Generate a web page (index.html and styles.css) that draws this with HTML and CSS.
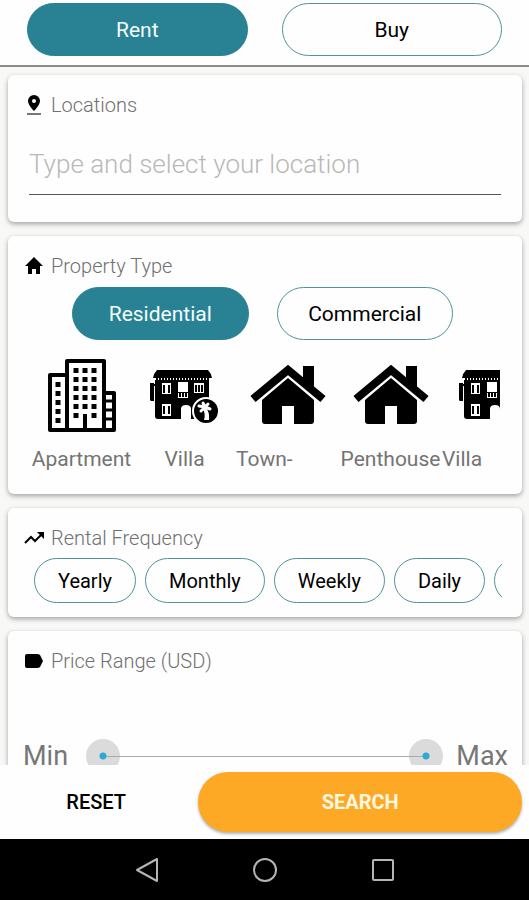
FILE: index.html
```html
<!DOCTYPE html>
<html lang="en">
<head>
<meta charset="utf-8">
<meta name="viewport" content="width=device-width, initial-scale=1">
<title>Property search</title>
<link rel="stylesheet" href="styles.css">
</head>
<body>
<svg class="defs" aria-hidden="true">
  <symbol id="house" viewBox="0 0 74 60" overflow="visible">
    <path d="M2 34 37 5 72 34" fill="none" stroke="#000" stroke-width="8"/>
    <path d="M52 1h11v25L52 17z"/>
    <path d="M37 13 63 35v21q0 3-3 3H43V41H31v18H14q-3 0-3-3V35z"/>
  </symbol>
  <symbol id="villa" viewBox="0 0 70 54">
    <path d="M7 1h51q3 3 4 8H3q1-5 4-8z"/>
    <path d="M6 10h53" stroke="#000" stroke-width="2" stroke-dasharray="2 1"/>
    <path d="M6 11h53v39H41V40q0-4-5-4t-5 4v10H8q-3 0-3-3V11z"/>
    <path d="M0 14h4v18H1q-1 0-1-2zM3 15h4v2H3z"/>
    <path fill="#fff" d="M12 14h9v11h-9zM28 13h10v10H28zM44 14h10v10H44zM12 35h9v12h-9zM28 24h10v5H28z"/>
    <path d="M14 16v8M19 16v8M46 16v7M49 16v7M52 16v7M14 37v8M19 37v8M30 24v4M33 24v4M36 24v4" stroke="#000" stroke-width="2"/>
  </symbol>
</svg>

<header class="tabs">
  <button class="pill active" type="button">Rent</button>
  <button class="pill" type="button">Buy</button>
</header>

<main class="content">
  <section class="card">
    <h2 class="title">
      <svg class="title-icon" viewBox="0 0 20 20"><path d="M10 0a6 6 0 0 0-6 6c0 4 6 10 6 10s6-6 6-10a6 6 0 0 0-6-6zm0 4a2 2 0 1 1 0 4 2 2 0 0 1 0-4z"/><path d="M3 18h14v2H3z" fill="#777"/></svg>
      <label for="location">Locations</label>
    </h2>
    <input class="location" id="location" type="text" placeholder="Type and select your location">
  </section>

  <section class="card">
    <h2 class="title">
      <svg class="title-icon" viewBox="0 0 20 20"><path d="M10 1 1 10h3v8h4v-5h4v5h4v-8h3z"/></svg>
      Property Type
    </h2>
    <div class="kinds">
      <button class="pill active" type="button">Residential</button>
      <button class="pill" type="button">Commercial</button>
    </div>
    <div class="types">
      <button class="type" type="button">
        <svg class="type-icon" viewBox="0 0 72 76">
          <g fill="none" stroke="#000" stroke-width="4" stroke-linejoin="round"><path d="M20 17H4v55h64V35H58"/><path d="M21 72V3h37v69M39 56v16"/></g>
          <path d="M12 24v44" stroke="#000" stroke-width="5" stroke-dasharray="5 4"/>
          <path d="M30 10v52M39 10v43M48 10v52" stroke="#000" stroke-width="5" stroke-dasharray="5 4"/>
          <path d="M60 43h7M60 52h7M60 61h7" stroke="#000" stroke-width="3"/>
        </svg>
        <span>Apartment</span>
      </button>
      <button class="type" type="button">
        <svg class="type-icon" viewBox="0 0 72 76">
          <use href="#villa" x="1" y="11" width="70" height="54"/>
          <circle cx="57" cy="53" r="13" stroke="#fff" stroke-width="2"/>
          <path fill="#fff" d="M56 48q5 6 4 14h-5q2-7-2-12z"/>
          <path d="M56 49l-6-1M56 49l-4 4M56 49l-2-4M56 49l3-3M56 49l5 2" fill="none" stroke="#fff" stroke-width="3" stroke-linecap="round"/>
        </svg>
        <span>Villa</span>
      </button>
      <button class="type wrapped" type="button">
        <svg class="type-icon" viewBox="0 0 72 76"><use href="#house" x="-1" y="7" width="74" height="60"/></svg>
        <span>Town-</span>
      </button>
      <button class="type" type="button">
        <svg class="type-icon" viewBox="0 0 72 76"><use href="#house" x="-1" y="7" width="74" height="60"/></svg>
        <span>Penthouse</span>
      </button>
      <button class="type wrapped" type="button">
        <svg class="type-icon" viewBox="0 0 72 76"><use href="#villa" x="1" y="11" width="70" height="54"/></svg>
        <span>Villa</span>
      </button>
    </div>
  </section>

  <section class="card">
    <h2 class="title">
      <svg class="title-icon" viewBox="0 0 20 20"><path d="m1 15 6-6 4 4 7-7" fill="none" stroke="#000" stroke-width="2"/><path d="M13 4h7v7z"/></svg>
      Rental Frequency
    </h2>
    <div class="chips">
      <button class="chip" type="button">Yearly</button>
      <button class="chip" type="button">Monthly</button>
      <button class="chip" type="button">Weekly</button>
      <button class="chip" type="button">Daily</button>
      <button class="chip" type="button" aria-label="More"></button>
    </div>
  </section>

  <section class="card">
    <h2 class="title">
      <svg class="title-icon" viewBox="0 0 20 20"><path d="M3 3h10q2 0 3 1l3 6-3 6q-1 1-3 1H3q-2 0-2-2V5q0-2 2-2z"/></svg>
      Price Range (USD)
    </h2>
    <div class="range">
      <label for="min">Min</label>
      <div class="slider">
        <input id="min" type="range" min="0" max="100" value="0">
        <input id="max" type="range" min="0" max="100" value="100">
      </div>
      <label for="max">Max</label>
    </div>
  </section>
</main>

<footer class="actions">
  <button class="reset" type="button">RESET</button>
  <button class="search" type="button">SEARCH</button>
</footer>

<nav class="system">
  <button type="button" aria-label="Back"><svg viewBox="0 0 26 26"><path d="M23 2v22L3 13z"/></svg></button>
  <button type="button" aria-label="Home"><svg viewBox="0 0 26 26"><circle cx="13" cy="13" r="11"/></svg></button>
  <button type="button" aria-label="Recent apps"><svg viewBox="0 0 26 26"><rect x="3" y="3" width="20" height="20" rx="1"/></svg></button>
</nav>
</body>
</html>
```
FILE: styles.css
```css
* {
  box-sizing: border-box;
}

body {
  display: flex;
  flex-direction: column;
  height: 100vh;
  margin: 0;
  overflow: hidden;
  background: #fdfefd;
  color: #000;
  font-family: Roboto, "Liberation Sans", sans-serif;
}

button {
  margin: 0;
  padding: 0;
  border: 0;
  background: none;
  color: inherit;
  font: inherit;
}

.defs {
  position: absolute;
  width: 0;
  height: 0;
}

.tabs {
  display: flex;
  flex: none;
  gap: 34px;
  padding: 3px 27px 9px;
  border-bottom: 2px solid #8c8c8c;
}

.pill {
  flex: 1;
  height: 53px;
  border: 1px solid #4f929c;
  border-radius: 27px;
  background: #fefefe;
  font-size: 21px;
}

.pill.active {
  border-color: #298294;
  background: #298294;
  color: #f4fbfb;
}

.content {
  display: flex;
  flex: 1;
  flex-direction: column;
  gap: 14px;
  min-height: 0;
  padding: 8px 7px 8px 8px;
  overflow-y: auto;
  background: #f8f8f6;
  scrollbar-width: none;
}

.card {
  flex: none;
  padding: 18px 16px 0;
  border-radius: 6px;
  background: #fefefe;
  box-shadow: 0 2px 5px #00000059;
}

.title {
  display: flex;
  align-items: center;
  gap: 7px;
  height: 24px;
  margin: 0;
  color: #707070;
  font-size: 20px;
  font-weight: 300;
  line-height: 24px;
}

.title-icon {
  width: 20px;
  height: 20px;
  fill: #000;
}

.location {
  display: block;
  width: calc(100% - 10px);
  height: 60px;
  margin: 18px 5px 27px;
  padding: 0 0 2px;
  border: 0;
  border-bottom: 1px solid #555;
  outline: 0;
  background: none;
  font: 300 26px Roboto, "Liberation Sans", sans-serif;
}

.location::placeholder {
  color: #b8b8b8;
  opacity: 1;
}

.kinds {
  display: flex;
  gap: 28px;
  padding: 9px 53px 0 48px;
}

.types {
  display: flex;
  margin: 18px 6px 0;
  padding-bottom: 22px;
  overflow-x: auto;
  scrollbar-width: none;
}

.type {
  display: flex;
  flex: 0 0 103px;
  flex-direction: column;
  align-items: center;
  gap: 12px;
  color: #747474;
  font-size: 21px;
  line-height: 26px;
}

.wrapped span {
  align-self: flex-start;
}

.type-icon {
  width: 72px;
  height: 76px;
  overflow: visible;
  fill: #000;
}

.chips {
  display: flex;
  gap: 9px;
  margin-right: 4px;
  padding: 8px 0 14px 10px;
  overflow-x: auto;
  scrollbar-width: none;
}

.chip {
  flex: none;
  min-width: 91px;
  height: 45px;
  padding: 0 23px;
  border: 1px solid #4f929c;
  border-radius: 23px;
  font-size: 20px;
}

.range {
  display: flex;
  align-items: center;
  gap: 13px;
  height: 34px;
  margin: 66px -2px 24px -1px;
  color: #777;
  font-size: 27px;
}

.slider {
  display: grid;
  flex: 1;
  align-items: center;
  margin-left: 5px;
  background: linear-gradient(#aaa, #aaa) center / calc(100% - 34px) 1px no-repeat;
}

.slider input {
  grid-area: 1 / 1;
  width: 100%;
  height: 34px;
  margin: 0;
  appearance: none;
  background: none;
  pointer-events: none;
}

.slider input::-webkit-slider-thumb {
  width: 34px;
  height: 34px;
  border: 0;
  border-radius: 50%;
  appearance: none;
  background: radial-gradient(circle, #2fa8d5 3px, #aaaaaa6b 4px);
  pointer-events: auto;
}

.actions {
  display: flex;
  flex: none;
  padding: 7px 7px 7px 0;
  background: #fdfefd;
  font-size: 20px;
  font-weight: 500;
}

.reset {
  flex: 0 0 38%;
  padding-right: 6px;
}

.search {
  flex: 1;
  height: 60px;
  border-radius: 30px;
  background: #fda926;
  box-shadow: 0 2px 3px #0000004d;
  color: #fff8e0;
  font-weight: 700;
}

.system {
  display: flex;
  flex: none;
  justify-content: center;
  gap: 92px;
  height: 61px;
  background: #000;
}

.system svg {
  display: block;
  width: 26px;
  height: 26px;
  fill: none;
  stroke: #b5b5b5;
  stroke-width: 2;
  stroke-linejoin: round;
}
```
